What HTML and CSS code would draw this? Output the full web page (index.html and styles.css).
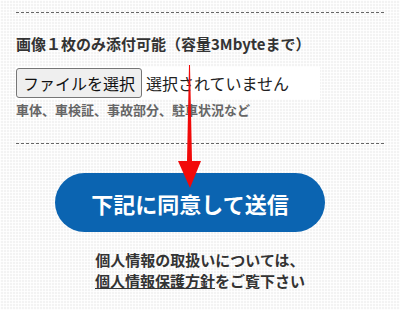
FILE: index.html
```html
<!DOCTYPE html>
<html lang="ja">
<head>
<meta charset="utf-8">
<link rel="stylesheet" href="styles.css">
</head>
<body>
<div class="page">
  <div class="rule rule-top"></div>
  <p class="label">画像１枚のみ添付可能（容量3Mbyteまで）</p>
  <div class="file">
    <span class="file-btn">ファイルを選択</span>
    <span class="file-name">選択されていません</span>
  </div>
  <p class="hint">車体、車検証、事故部分、駐車状況など</p>
  <div class="rule rule-mid"></div>
  <div class="submit-wrap">
    <button class="submit" type="button">下記に同意して送信</button>
  </div>
  <p class="privacy">個人情報の取扱いについては、<br><a class="privacy-link" href="#">個人情報保護方針</a>をご覧下さい</p>
  <svg class="arrow" width="30" height="135" viewBox="0 0 30 135">
    <polygon fill="#f20a0a" points="14,0 15,0 17,96 26,96 15,123 3,96 12,96"/>
  </svg>
</div>
</body>
</html>
```

FILE: styles.css
```css
html, body {
  margin: 0;
  padding: 0;
}
body {
  width: 400px;
  height: 310px;
  overflow: hidden;
  background-color: #f3f3f3;
  background-image:
    linear-gradient(90deg, rgba(255,255,255,0.85) 1px, transparent 1px),
    linear-gradient(rgba(255,255,255,0.85) 1px, transparent 1px);
  background-size: 3px 3px;
  font-family: "Noto Sans CJK JP", "Noto Sans", sans-serif;
  color: #333;
}
.page {
  position: relative;
  padding: 12px 16px 0;
}
.rule {
  border-top: 1px dashed #666;
  height: 0;
}
.label {
  margin: 20px 0 0;
  font-size: 15px;
  line-height: 22px;
  font-weight: 700;
  color: #333;
}
.file {
  margin-top: 12px;
  display: flex;
  align-items: center;
  width: 304px;
  height: 32px;
  background: #fff;
}
.file-btn {
  box-sizing: border-box;
  height: 30px;
  padding: 0 6px;
  display: flex;
  align-items: center;
  font-size: 16px;
  color: #111;
  background: #efefef;
  border: 1px solid #767676;
  border-radius: 3px;
}
.file-name {
  margin-left: 4px;
  font-size: 16px;
  color: #222;
}
.hint {
  margin: 2px 0 0;
  font-size: 13px;
  line-height: 18px;
  font-weight: 700;
  color: #666;
}
.rule-mid {
  margin-top: 24px;
}
.submit-wrap {
  margin-top: 29px;
  padding-left: 39px;
}
.submit {
  width: 270px;
  height: 59px;
  border: none;
  border-radius: 30px;
  background: #0b64b1;
  color: #fff;
  font-family: "Noto Sans CJK JP", "Noto Sans", sans-serif;
  font-size: 22px;
  font-weight: 700;
  letter-spacing: 0;
  padding: 0;
  display: flex;
  align-items: center;
  justify-content: center;
}
.privacy {
  margin: 17px 0 0;
  text-align: center;
  font-size: 15px;
  line-height: 21px;
  font-weight: 700;
  color: #333;
}
.privacy-link {
  color: #333;
  text-decoration: underline;
}
.arrow {
  position: absolute;
  left: 175px;
  top: 65px;
}
```
